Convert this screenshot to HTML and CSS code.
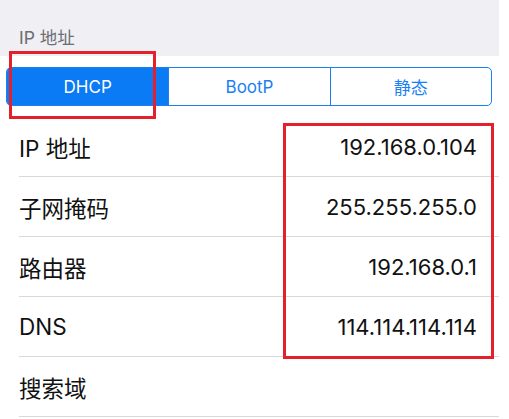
FILE: index.html
```html
<!DOCTYPE html>
<html lang="zh-CN">
<head>
    <meta charset="UTF-8">
    <meta name="viewport" content="width=device-width, initial-scale=1.0">
    <title>IP 地址</title>
    <link rel="stylesheet" href="styles.css">
</head>
<body>
    <div class="page">
        <div class="section-header">IP 地址</div>

        <div class="segmented">
            <div class="segment active">DHCP</div>
            <div class="segment">BootP</div>
            <div class="segment">静态</div>
        </div>

        <div class="list">
            <div class="row">
                <span class="label">IP 地址</span>
                <span class="value">192.168.0.104</span>
            </div>
            <div class="row">
                <span class="label">子网掩码</span>
                <span class="value">255.255.255.0</span>
            </div>
            <div class="row">
                <span class="label">路由器</span>
                <span class="value">192.168.0.1</span>
            </div>
            <div class="row">
                <span class="label">DNS</span>
                <span class="value">114.114.114.114</span>
            </div>
            <div class="row">
                <span class="label">搜索域</span>
                <span class="value"></span>
            </div>
        </div>

        <!-- annotation boxes drawn over the screenshot -->
        <div class="mark mark-mode"></div>
        <div class="mark mark-values"></div>
    </div>
</body>
</html>
```

FILE: styles.css
```css
body {
    margin: 0;
    background-color: white;
    font-family: Inter, "Noto Sans CJK SC", sans-serif;
    color: #111;
}
.page {
    position: relative;
    width: 499px;
    height: 419px;
    overflow: hidden;
}
.section-header {
    box-sizing: border-box;
    height: 56px;
    padding: 26px 0 0 19px;
    background-color: #efeff4;
    color: #6d6d72;
    font-size: 17.5px;
    line-height: 24px;
}
.segmented {
    display: grid;
    grid-template-columns: repeat(3, 1fr);
    box-sizing: border-box;
    width: 486px;
    height: 39px;
    margin: 11px 0 0 6px;
    border: 1px solid #1a7ff3;
    border-radius: 5px;
    overflow: hidden;
}
.segment {
    display: flex;
    justify-content: center;
    align-items: center;
    color: #1a7ff3;
    font-size: 17px;
}
.segment + .segment {
    border-left: 1px solid #1a7ff3;
}
.segment.active {
    background-color: #0a7af5;
    color: white;
}
.list {
    margin-top: 11px;
}
.row {
    display: flex;
    justify-content: space-between;
    align-items: center;
    height: 59px;
    margin-left: 19px;
    padding-right: 22px;
    border-bottom: 1px solid #d8d8dc;
    font-size: 22px;
}
.label {
    font-size: 22.5px;
}
.mark {
    position: absolute;
    box-sizing: border-box;
    border: 3px solid #e3202b;
}
.mark-mode {
    left: 9px;
    top: 51px;
    width: 147px;
    height: 68px;
}
.mark-values {
    left: 283px;
    top: 123px;
    width: 211px;
    height: 236px;
}
```
